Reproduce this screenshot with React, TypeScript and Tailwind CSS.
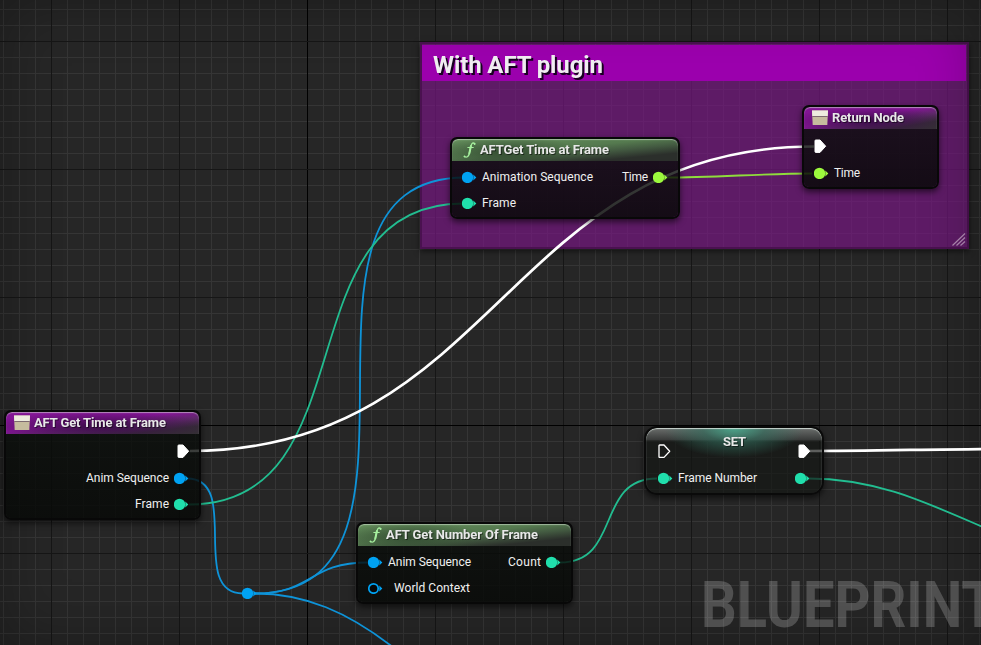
import React from "react";

const BLUE = "#00a2f2";
const TEAL = "#20dfac";
const LIME = "#9cf93d";

const range = (from: number, to: number, step: number) => {
  const out: number[] = [];
  for (let v = from; v < to; v += step) out.push(v);
  return out;
};

function Grid() {
  return (
    <svg className="absolute inset-0" width="981" height="645" shapeRendering="crispEdges">
      {range(3, 981, 16).map((x) => (
        <rect key={x} x={x} y="0" width="1" height="645" fill="#353535" />
      ))}
      {range(9, 645, 16).map((y) => (
        <rect key={y} x="0" y={y} width="981" height="1" fill="#353535" />
      ))}
      {range(51, 981, 128).map((x) => (
        <rect key={x} x={x} y="0" width="1" height="645" fill={x === 307 ? "#000" : "#161616"} />
      ))}
      {range(41, 645, 128).map((y) => (
        <rect key={y} x="0" y={y} width="981" height="1" fill={y === 425 ? "#000" : "#161616"} />
      ))}
    </svg>
  );
}

function Wires() {
  return (
    <svg className="absolute inset-0" width="981" height="645" fill="none">
      <g stroke="#0e93d8" strokeWidth="1.8">
        <path d="M187 478.500 C242 478.500 188 593.500 243 593.500" />
        <path d="M255 593.500 C463 593.500 257 177.500 465 177.500" />
        <path d="M255 593.500 C313 593.500 308 562.500 368 562.500" />
        <path d="M255 593.500 C305 593.500 348 612 394 648" />
      </g>
      <g stroke="#22bd90" strokeWidth="1.8">
        <path d="M189 504.500 C371 504.500 281 203.500 463 203.500" />
        <path d="M560 562.500 C622 562.500 595 478.500 657 478.500" />
        <path d="M808 478.500 C876 478.500 925 502 985 528" />
      </g>
      <path d="M666 177.500 C715 177.500 763 173.500 812 173.500" stroke="#8fdc3c" strokeWidth="1.8" />
      <g stroke="#fff" strokeWidth="2.7">
        <path d="M190 451 C496 451 508 146.500 814 146.500" />
        <path d="M808 451 C866 451 923 449.500 985 449" />
      </g>
    </svg>
  );
}

function Pin({ color, hollow }: { color: string; hollow?: boolean }) {
  return (
    <svg width="15" height="12" viewBox="0 0 15 12" className="shrink-0">
      {hollow ? (
        <circle cx="5.500" cy="6.500" r="4.700" fill="#050809" stroke={color} strokeWidth="1.700" />
      ) : (
        <circle cx="5.500" cy="6.400" r="5.700" fill={color} />
      )}
      <path d="M11.300 3.400 L14.300 6.400 L11.300 9.400 Z" fill={color} />
    </svg>
  );
}

function Exec({ hollow }: { hollow?: boolean }) {
  return (
    <svg width="13" height="15" viewBox="0 0 13 15" className="shrink-0">
      <path
        d="M1.700 1 H6 L11.700 7.200 L6 13.400 H1.700 Q1 13.400 1 12.700 V1.700 Q1 1 1.700 1 Z"
        fill={hollow ? "none" : "#fff"}
        stroke="#fff"
        strokeWidth={hollow ? 1.3 : 1}
        strokeLinejoin="round"
      />
    </svg>
  );
}

function TerminalIcon() {
  return (
    <svg width="16" height="16" viewBox="0 0 16 16" className="shrink-0">
      <path d="M0 0.500 H16 L15.300 15 H0.700 Z" fill="#c6bc9e" />
      <path d="M0 0.500 H16 L15.700 6 H0.300 Z" fill="#eeecdf" />
      <path d="M0.300 6.500 H15.700" stroke="#7d6a70" strokeWidth="1" />
    </svg>
  );
}

function FunctionIcon() {
  return (
    <svg width="13" height="16" viewBox="0 0 13 16" className="shrink-0" fill="none" stroke="#a6f09e" strokeLinecap="round">
      <path d="M11.800 1.800 C10.400 0.200 8.600 1 8 3.800 L6.300 11.500 C5.600 14.700 3.700 15.900 1.300 14.500" strokeWidth="1.300" />
      <path d="M7.900 4 L6.300 11.500" strokeWidth="2" />
      <path d="M4.800 5.500 H10.300" strokeWidth="1" />
      <path d="M11.600 1.700 V2.200 M1.500 14.300 V14.600" strokeWidth="1.600" />
    </svg>
  );
}

function Label({ children, width }: { children: React.ReactNode; width: number }) {
  return (
    <svg width={width} height="18" className="shrink-0 overflow-visible text-xs">
      <text x="0" y="13" textLength={width} fill="#f0f0f0">
        {children}
      </text>
    </svg>
  );
}

function Title({ children, width }: { children: React.ReactNode; width: number }) {
  return (
    <svg width={width} height="18" className="shrink-0 overflow-visible text-[13px] font-bold drop-shadow-[1px_1px_0px_rgba(0,0,0,0.5)]">
      <text x="0" y="13" textLength={width} fill="#e8e8e8">
        {children}
      </text>
    </svg>
  );
}

const TINTS = {
  green:
    "bg-[radial-gradient(ellipse_75px_16px_at_24%_60%,#344d32_0%,#344d3200_100%),linear-gradient(to_bottom_right,#68935f_0%,#557a4f_45%,#435a41_62%,#2b2f2b_82%)]",
  purple:
    "bg-[radial-gradient(ellipse_60%_65%_at_50%_65%,#3c0c4a_0%,#3c0c4a00_100%),linear-gradient(to_bottom_right,#831595_0%,#831595_45%,#5c2a66_65%,#343034_82%)]",
};

function Node({
  place,
  tint,
  icon,
  title,
  titleWidth,
  children,
}: {
  place: string;
  tint: keyof typeof TINTS;
  icon: React.ReactNode;
  title: string;
  titleWidth: number;
  children: React.ReactNode;
}) {
  return (
    <section
      className={`absolute flex flex-col overflow-hidden rounded-[7px] border-2 border-[#080808] bg-linear-to-b from-[#090d0ac4] to-[#070907d8] bg-clip-padding shadow-[0_3px_6px_rgba(0,0,0,0.6)] ${place}`}
    >
      <header
        className={`flex h-[22px] shrink-0 items-center rounded-t-[6px] shadow-[inset_0_1px_1px_rgba(220,235,220,0.55)] ${TINTS[tint]}`}
      >
        {icon}
        <Title width={titleWidth}>{title}</Title>
      </header>
      {children}
    </section>
  );
}

export default function App() {
  return (
    <main className="relative h-[645px] w-[981px] overflow-hidden bg-[#262626] font-[Roboto,'Liberation_Sans',sans-serif]">
      <Grid />

      <section className="absolute top-[42px] left-[420px] h-[207px] w-[549px] border-2 border-[#4a1150] bg-[#7a1686ab] bg-clip-padding shadow-[0_2px_6px_rgba(0,0,0,0.6)]">
        <header className="mt-px h-[36px] w-[544px] bg-[#9b00ad]">
          <svg width="180" height="36" className="overflow-visible text-2xl font-bold drop-shadow-[2px_2px_0px_#180020]">
            <text x="11" y="28" textLength="170" fill="#f0edf1">With AFT plugin</text>
          </svg>
        </header>
        <svg className="absolute right-px bottom-px" width="14" height="13" stroke="#b18ab4" strokeWidth="1.200">
          <path d="M0.500 12.500 L13 0.500 M4.500 12.500 L13 4.500 M8.500 12.500 L13 8.500" />
        </svg>
      </section>

      <div className="absolute inset-0 shadow-[inset_0_0_60px_rgba(0,0,0,0.3)]" />

      <div className="absolute top-[571px] left-[701px]">
        <svg width="300" height="74" className="overflow-visible text-[64.5px] font-bold">
          <text x="0" y="56" textLength="295" lengthAdjust="spacingAndGlyphs" fill="#ffffff" fillOpacity="0.200">BLUEPRINT</text>
        </svg>
      </div>

      <Wires />

      <div className="absolute top-[587px] left-[242px] flex">
        <Pin color={BLUE} />
      </div>

      <Node
        place="left-[450px] top-[137px] h-[82px] w-[230px]"
        tint="green"
        icon={<div className="mr-[4px] ml-[11px] flex"><FunctionIcon /></div>}
        title="AFTGet Time at Frame"
        titleWidth={129}
      >
        <div className="mt-[3px] flex h-[26px] items-center pr-[10px] pl-[10px]">
          <Pin color={BLUE} />
          <div className="ml-[5px] flex"><Label width={111}>Animation Sequence</Label></div>
          <div className="ml-auto flex items-center gap-[5px]">
            <Label width={26}>Time</Label>
            <Pin color={LIME} />
          </div>
        </div>
        <div className="flex h-[26px] items-center gap-[5px] pl-[10px]">
          <Pin color={TEAL} />
          <Label width={34}>Frame</Label>
        </div>
      </Node>

      <Node
        place="left-[802px] top-[105px] h-[84px] w-[137px]"
        tint="purple"
        icon={<div className="mr-[4px] ml-[8px] flex"><TerminalIcon /></div>}
        title="Return Node"
        titleWidth={72}
      >
        <div className="mt-[4px] flex h-[26px] items-center pl-[10px]">
          <Exec />
        </div>
        <div className="flex h-[27px] items-center gap-[5px] pl-[10px]">
          <Pin color={LIME} />
          <Label width={26}>Time</Label>
        </div>
      </Node>

      <Node
        place="left-[4px] top-[410px] h-[110px] w-[197px]"
        tint="purple"
        icon={<div className="mr-[4px] ml-[8px] flex"><TerminalIcon /></div>}
        title="AFT Get Time at Frame"
        titleWidth={132}
      >
        <div className="mt-[4px] flex h-[26px] items-center justify-end pr-[9px]">
          <Exec />
        </div>
        <div className="flex h-[27px] items-center justify-end gap-[5px] pr-[10px]">
          <Label width={83}>Anim Sequence</Label>
          <Pin color={BLUE} />
        </div>
        <div className="flex h-[26px] items-center justify-end gap-[5px] pr-[10px]">
          <Label width={34}>Frame</Label>
          <Pin color={TEAL} />
        </div>
      </Node>

      <Node
        place="left-[356px] top-[522px] h-[82px] w-[217px]"
        tint="green"
        icon={<div className="mr-[4px] ml-[11px] flex"><FunctionIcon /></div>}
        title="AFT Get Number Of Frame"
        titleWidth={152}
      >
        <div className="mt-[3px] flex h-[26px] items-center justify-between pr-[10px] pl-[10px]">
          <div className="flex items-center gap-[5px]">
            <Pin color={BLUE} />
            <Label width={83}>Anim Sequence</Label>
          </div>
          <div className="flex items-center gap-[5px]">
            <Label width={33}>Count</Label>
            <Pin color={TEAL} />
          </div>
        </div>
        <div className="flex h-[26px] items-center gap-[11px] pl-[10px]">
          <Pin color={BLUE} hollow />
          <Label width={76}>World Context</Label>
        </div>
      </Node>

      <section className="absolute top-[426px] left-[644px] h-[69px] w-[180px] overflow-hidden rounded-[13px] border-2 border-[#0a0a0a] bg-[#151715b0] bg-clip-padding shadow-[0_3px_6px_rgba(0,0,0,0.6)]">
        <div className="flex h-full flex-col rounded-[11px] bg-[radial-gradient(ellipse_70px_30px_at_50%_0%,#4ba48a_0%,#33705fa0_45%,#1e3c3400_100%),linear-gradient(180deg,#6b6e6c_0px,#383a39_12px,#1b1d1b00_13px)] shadow-[inset_0_1px_1px_rgba(230,240,235,0.8)]">
          <div className="flex h-[36px] items-center justify-between pt-[10px] pr-[11px] pl-[12px]">
            <Exec hollow />
            <div className="-mt-[18px] flex"><Title width={23}>SET</Title></div>
            <Exec />
          </div>
          <div className="flex h-[28px] items-center justify-between pr-[12px] pl-[12px]">
            <div className="flex items-center gap-[5px]">
              <Pin color={TEAL} />
              <Label width={79}>Frame Number</Label>
            </div>
            <Pin color={TEAL} />
          </div>
        </div>
      </section>
    </main>
  );
}
